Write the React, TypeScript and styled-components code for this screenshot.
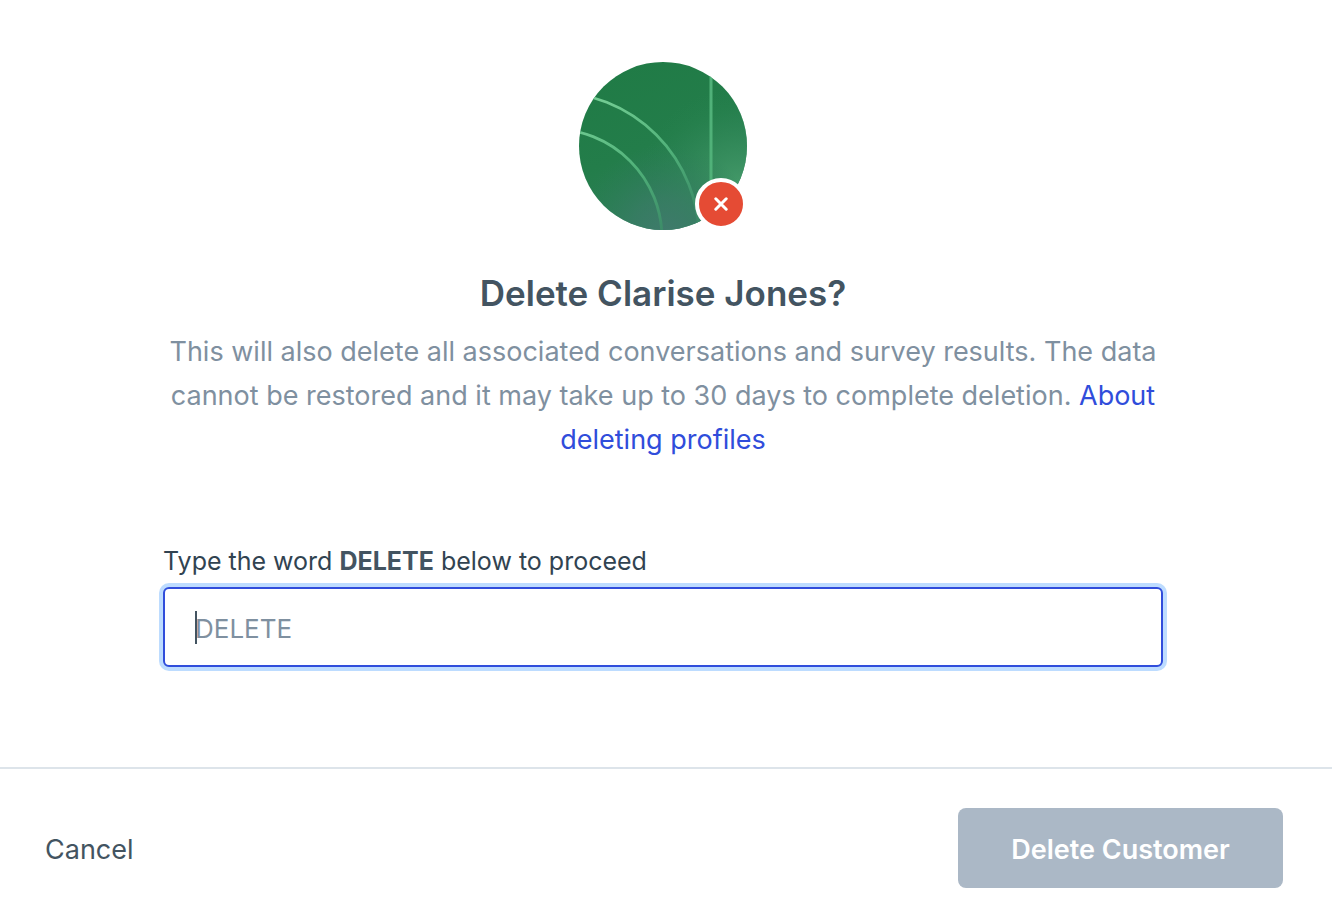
import React, { useState } from "react";
import styled, { createGlobalStyle } from "styled-components";

const GlobalStyle = createGlobalStyle`
  *, *::before, *::after { box-sizing: border-box; }
  body {
    margin: 0;
    background: #ffffff;
    color: #435461;
    font-family: Inter, "Liberation Sans", sans-serif;
  }
`;

const Dialog = styled.form`
  display: flex;
  flex-direction: column;
  min-height: 100vh;
`;

const Body = styled.div`
  flex: 1;
  display: flex;
  flex-direction: column;
  align-items: center;
  padding: 62px 169px 100px 163px;
`;

const AvatarFrame = styled.div`
  position: relative;
  width: 168px;
  height: 168px;
  margin-bottom: 41px;
`;

const Portrait = styled.svg`
  display: block;
  width: 100%;
  height: 100%;
`;

const RemoveBadge = styled.span`
  position: absolute;
  right: 0;
  bottom: 0;
  display: flex;
  align-items: center;
  justify-content: center;
  width: 52px;
  height: 52px;
  border: 4px solid #ffffff;
  border-radius: 50%;
  background: #e54b34;
`;

const Title = styled.h1`
  margin: 0 0 15px;
  font-size: 35px;
  line-height: 44px;
  font-weight: 600;
  text-align: center;
`;

const Message = styled.p`
  max-width: 1000px;
  margin: 0 0 79px;
  color: #7f90a0;
  font-size: 27px;
  line-height: 44px;
  text-align: center;
`;

const HelpLink = styled.a`
  color: #304ddb;
  text-decoration: none;
`;

const Field = styled.div`
  display: flex;
  flex-direction: column;
  gap: 6px;
  width: 100%;
  max-width: 1000px;
`;

const FieldLabel = styled.label`
  color: #314351;
  font-size: 25px;
  line-height: 40px;

  strong {
    color: #435461;
    font-weight: 700;
  }
`;

const InputFrame = styled.div`
  position: relative;
  display: flex;
  align-items: center;
`;

const ConfirmInput = styled.input`
  width: 100%;
  height: 80px;
  padding: 2px 30px 0;
  border: 2px solid #304ddb;
  border-radius: 6px;
  outline: none;
  box-shadow: 0 0 0 4px #bddcff;
  color: #435461;
  caret-color: transparent;
  font-family: inherit;
  font-size: 26px;

  &::placeholder {
    color: #7f90a0;
    opacity: 1;
  }
`;

const Caret = styled.span`
  position: absolute;
  left: 32px;
  width: 2px;
  height: 33px;
  background: #435461;
`;

const Footer = styled.footer`
  display: flex;
  align-items: center;
  justify-content: space-between;
  padding: 39px 49px 24px 45px;
  border-top: 2px solid #dde4ea;
`;

const Button = styled.button`
  height: 80px;
  padding: 2px 0 0;
  border: 0;
  border-radius: 8px;
  background: transparent;
  color: #435461;
  font-family: inherit;
  font-size: 27px;
`;

const DeleteButton = styled(Button)`
  width: 325px;
  background: #abb8c6;
  color: #ffffff;
  font-weight: 600;
`;

function Avatar() {
  return (
    <AvatarFrame>
      <Portrait viewBox="0 0 168 168" aria-hidden="true">
        <defs>
          <linearGradient id="base" x1="0.3" y1="0" x2="0.75" y2="1">
            <stop offset="0" stopColor="#207b46" />
            <stop offset="0.45" stopColor="#237d4a" />
            <stop offset="1" stopColor="#338060" />
          </linearGradient>
          <radialGradient id="glow" gradientUnits="userSpaceOnUse" cx="160" cy="125" r="100">
            <stop offset="0" stopColor="#459a6a" />
            <stop offset="0.4" stopColor="#39915f" stopOpacity="0.65" />
            <stop offset="1" stopColor="#278350" stopOpacity="0" />
          </radialGradient>
          <radialGradient id="haze" gradientUnits="userSpaceOnUse" cx="88" cy="172" r="90">
            <stop offset="0" stopColor="#407a6c" />
            <stop offset="0.4" stopColor="#3a7b66" stopOpacity="0.7" />
            <stop offset="1" stopColor="#2b7b56" stopOpacity="0" />
          </radialGradient>
          <linearGradient id="arc" gradientUnits="userSpaceOnUse" x1="20" y1="30" x2="95" y2="165">
            <stop offset="0" stopColor="#76cf96" />
            <stop offset="0.55" stopColor="#50b179" />
            <stop offset="1" stopColor="#3b8a67" />
          </linearGradient>
          <clipPath id="round">
            <circle cx="84" cy="84" r="84" />
          </clipPath>
        </defs>
        <g clipPath="url(#round)">
          <rect width="168" height="168" fill="url(#base)" />
          <rect width="168" height="168" fill="url(#glow)" />
          <rect width="168" height="168" fill="url(#haze)" />
          <circle cx="-26" cy="176" r="109" fill="none" stroke="url(#arc)" strokeWidth="2.8" />
          <circle cx="-26" cy="176" r="146" fill="none" stroke="url(#arc)" strokeWidth="2.8" />
          <path d="M132 0V168" stroke="#50b179" strokeWidth="3" />
        </g>
      </Portrait>
      <RemoveBadge>
        <svg width="14" height="14" viewBox="0 0 14 14" aria-hidden="true">
          <path d="M1.8 1.8L12.2 12.2M12.2 1.8L1.8 12.2" stroke="#ffffff" strokeWidth="3" strokeLinecap="round" />
        </svg>
      </RemoveBadge>
    </AvatarFrame>
  );
}

export default function App() {
  const [word, setWord] = useState("");

  return (
    <>
      <GlobalStyle />
      <Dialog onSubmit={(event) => event.preventDefault()}>
        <Body>
          <Avatar />
          <Title>Delete Clarise Jones?</Title>
          <Message>
            This will also delete all associated conversations and survey results. The data cannot be
            restored and it may take up to 30 days to complete deletion.{" "}
            <HelpLink href="#deleting-profiles">About deleting profiles</HelpLink>
          </Message>
          <Field>
            <FieldLabel htmlFor="confirm">
              Type the word <strong>DELETE</strong> below to proceed
            </FieldLabel>
            <InputFrame>
              <ConfirmInput
                id="confirm"
                type="text"
                placeholder="DELETE"
                autoComplete="off"
                value={word}
                onChange={(event) => setWord(event.target.value)}
              />
              {word === "" && <Caret />}
            </InputFrame>
          </Field>
        </Body>
        <Footer>
          <Button type="button">Cancel</Button>
          <DeleteButton type="submit" disabled={word !== "DELETE"}>
            Delete Customer
          </DeleteButton>
        </Footer>
      </Dialog>
    </>
  );
}
